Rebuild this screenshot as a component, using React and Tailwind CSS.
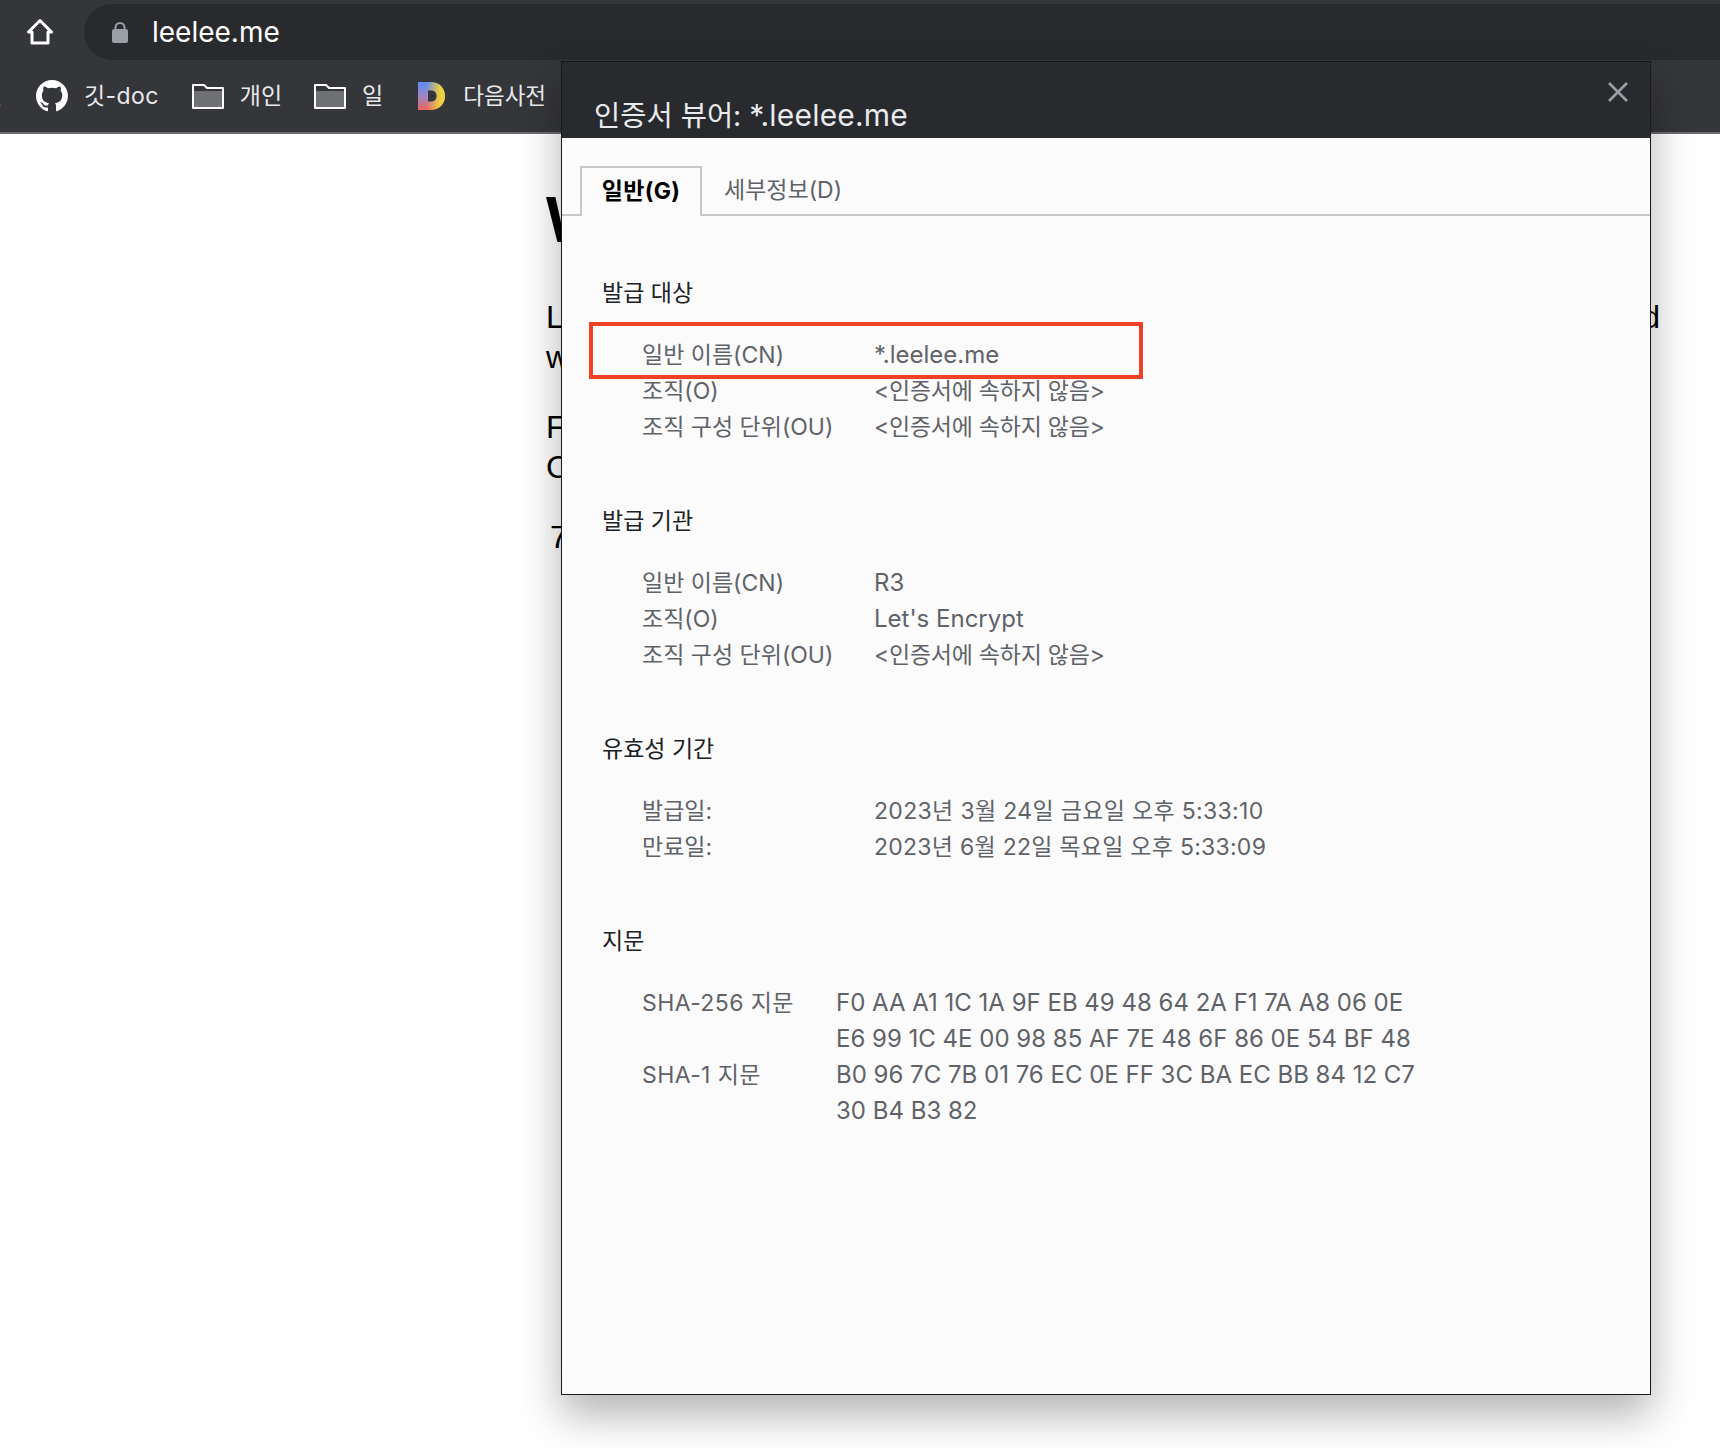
const font = 'font-["Inter","Noto_Sans_CJK_KR",sans-serif]'

function Home() {
  return (
    <svg width="28" height="28" viewBox="0 0 28 28" fill="none" stroke="#ffffff" strokeWidth="3" strokeLinejoin="round">
      <path d="M14 2.500 2.500 14H6v11h16V14h3.500z" />
    </svg>
  )
}

function Lock() {
  return (
    <svg width="18" height="22" viewBox="0 0 18 22">
      <path d="M4.500 9V6.500a4.500 4.500 0 0 1 9 0V9" fill="none" stroke="#9aa0a6" strokeWidth="2" />
      <rect x="1" y="8" width="16" height="14" rx="2" fill="#9aa0a6" />
    </svg>
  )
}

function Folder() {
  return (
    <svg width="32" height="25" viewBox="0 0 32 25">
      <path d="M1 24V1h11l3 3h16v20z" fill="#35363a" stroke="#ffffff" strokeWidth="2" strokeLinejoin="round" />
      <rect x="2" y="7" width="28" height="16" fill="#6f7072" />
    </svg>
  )
}

function Github() {
  return (
    <svg width="32" height="32" viewBox="0 0 16 16" fill="#ffffff">
      <path d="M8 0C3.580 0 0 3.580 0 8c0 3.540 2.290 6.530 5.470 7.590.4.070.55-.17.55-.38 0-.19-.01-.82-.01-1.490-2.010.37-2.530-.49-2.690-.94-.09-.23-.48-.94-.82-1.130-.28-.15-.68-.52-.01-.53.63-.01 1.080.58 1.230.82.72 1.210 1.870.87 2.330.66.07-.52.28-.87.51-1.070-1.780-.2-3.640-.89-3.640-3.950 0-.87.31-1.590.82-2.150-.08-.2-.36-1.020.08-2.120 0 0 .67-.21 2.200.82.64-.18 1.320-.27 2-.27s1.360.09 2 .27c1.530-1.040 2.200-.82 2.200-.82.44 1.100.16 1.920.08 2.120.51.56.82 1.270.82 2.150 0 3.070-1.870 3.750-3.650 3.950.29.25.54.73.54 1.480 0 1.070-.01 1.930-.01 2.200 0 .21.15.46.55.38A8.013 8.013 0 0 0 16 8c0-4.420-3.580-8-8-8z" />
    </svg>
  )
}

function DaumIcon() {
  return (
    <svg width="27" height="28" viewBox="0 0 27 28">
      <defs>
        <linearGradient id="daumBase" x1="0" y1="0" x2="0" y2="1">
          <stop offset="0" stopColor="#5b8df6" />
          <stop offset="0.5" stopColor="#9b86c8" />
          <stop offset="1" stopColor="#f0625a" />
        </linearGradient>
        <linearGradient id="daumSide" x1="0" y1="0" x2="1" y2="0">
          <stop offset="0.3" stopColor="#f0d33c" stopOpacity="0" />
          <stop offset="0.85" stopColor="#f0d33c" />
        </linearGradient>
      </defs>
      <path d="M0 0h12.500C21 0 27 6 27 14s-6 14-14.500 14H0z" fill="url(#daumBase)" />
      <path d="M0 0h12.500C21 0 27 6 27 14s-6 14-14.500 14H0z" fill="url(#daumSide)" />
      <path d="M10 8.500h3c3.500 0 5.500 2.200 5.500 5.500s-2 5.500-5.500 5.500h-3z" fill="#35363a" />
    </svg>
  )
}

function Bookmark({ icon, label, className }) {
  return (
    <div className={`flex items-center text-[23px] text-[#e8eaed] ${className}`}>
      {icon}
      <span className="ml-[16px]">{label}</span>
    </div>
  )
}

function Row({ label, value, labelClass = 'w-[232px]', valueClass = '' }) {
  return (
    <div className="flex h-[36px] items-center pl-[40px] text-[23px] text-[#5f6368]">
      <span className={`shrink-0 ${labelClass}`}>{label}</span>
      <span className={valueClass}>{value}</span>
    </div>
  )
}

function Section({ title, className, children }) {
  return (
    <section className={className}>
      <h2 className="h-[36px] text-[23px] leading-[36px] text-[#202124]">{title}</h2>
      <div className="mt-[26px]">{children}</div>
    </section>
  )
}

const notInCert = '<인증서에 속하지 않음>'
const sha = 'w-[194px] tracking-[0.4px]'

export default function App() {
  return (
    <div className={`relative h-[1448px] w-[1720px] overflow-hidden bg-white ${font}`}>
      <header className="h-[134px] border-b-[2px] border-[#6b6c6f] bg-[#35363a]">
        <div className="flex h-[64px] items-center pl-[26px]">
          <Home />
          <div className="ml-[30px] flex h-[56px] flex-1 items-center rounded-l-[28px] bg-[#292a2d] pl-[27px]">
            <Lock />
            <span className="ml-[23px] text-[28px] text-white">leelee.me</span>
          </div>
        </div>
        <div className="flex h-[64px] items-center">
          <div className="w-[36px] overflow-hidden text-[23px] text-[#e8eaed]">
            <span className="ml-[-19px]">일</span>
          </div>
          <Bookmark icon={<Github />} label={<span className="tracking-[0.4px]">깃-doc</span>} />
          <Bookmark icon={<Folder />} label="개인" className="ml-[33px]" />
          <Bookmark icon={<Folder />} label="일" className="ml-[32px]" />
          <Bookmark icon={<DaumIcon />} label={<span className="ml-[2px] text-[22.5px]">다음사전</span>} className="ml-[35px]" />
        </div>
      </header>

      <main className='absolute left-[546px] top-[134px] w-[1114px] font-["Liberation_Sans",sans-serif] text-black'>
        <h1 className="mt-[50px] text-[64px] font-bold leading-[72px]">W</h1>
        <div className="mt-[41px] flex justify-between text-[32px] leading-[40px]">
          <span>L</span>
          <span>d</span>
        </div>
        <p className="text-[32px] leading-[40px]">w</p>
        <p className="mt-[30px] text-[32px] leading-[40px]">F</p>
        <p className="text-[32px] leading-[40px]">C</p>
        <p className="mt-[30px] pl-[4px] text-[32px] leading-[40px]">7</p>
      </main>

      <div className="absolute left-[561px] top-[61px] flex h-[1334px] w-[1090px] flex-col border border-[#1a1a1c] bg-[#fbfbfb] shadow-[0_20px_40px_rgba(0,0,0,0.3)]">
        <div className="relative h-[76px] shrink-0 bg-[#292a2d]">
          <span className="absolute bottom-[2px] left-[32px] text-[28.5px] leading-[40px] text-[#e8eaed]">
            인증서 뷰어: <span className="text-[30px] tracking-[0.2px]">*.leelee.me</span>
          </span>
          <svg className="absolute right-[22px] top-[20px]" width="20" height="20" viewBox="0 0 20 20" stroke="#9aa0a6" strokeWidth="2.6">
            <path d="M1 1l18 18M19 1 1 19" />
          </svg>
        </div>

        <div className="flex h-[78px] shrink-0 items-end border-b-[2px] border-[#c8c8c8] pl-[18px]">
          <div className="mb-[-2px] flex h-[50px] w-[122px] items-center justify-center border-x-[2px] border-t-[2px] border-[#c8c8c8] bg-[#fbfbfb] pb-[2px] text-[23px] font-bold tracking-[0.3px] text-black">일반(G)</div>
          <div className="flex h-[48px] items-center pl-[22px] text-[23px] text-[#5f6368]">세부정보(D)</div>
        </div>

        <div className="relative flex-1 pl-[40px] pt-[59px]">
          <Section title="발급 대상">
            <Row label="일반 이름(CN)" value="*.leelee.me" valueClass="text-[24px]" />
            <Row label="조직(O)" value={notInCert} valueClass="tracking-[-0.25px]" />
            <Row label="조직 구성 단위(OU)" value={notInCert} valueClass="tracking-[-0.25px]" />
          </Section>
          <Section title="발급 기관" className="mt-[58px]">
            <Row label="일반 이름(CN)" value="R3" valueClass="text-[24px]" />
            <Row label="조직(O)" value="Let's Encrypt" valueClass="text-[24px]" />
            <Row label="조직 구성 단위(OU)" value={notInCert} valueClass="tracking-[-0.25px]" />
          </Section>
          <Section title="유효성 기간" className="mt-[58px]">
            <Row label="발급일:" value="2023년 3월 24일 금요일 오후 5:33:10" valueClass="tracking-[0.33px]" />
            <Row label="만료일:" value="2023년 6월 22일 목요일 오후 5:33:09" valueClass="tracking-[0.26px]" />
          </Section>
          <Section title="지문" className="mt-[58px]">
            <Row label="SHA-256 지문" value="F0 AA A1 1C 1A 9F EB 49 48 64 2A F1 7A A8 06 0E" labelClass={sha} valueClass="text-[24px]" />
            <Row label="" value="E6 99 1C 4E 00 98 85 AF 7E 48 6F 86 0E 54 BF 48" labelClass={sha} valueClass="text-[24px]" />
            <Row label="SHA-1 지문" value="B0 96 7C 7B 01 76 EC 0E FF 3C BA EC BB 84 12 C7" labelClass={sha} valueClass="text-[24px]" />
            <Row label="" value="30 B4 B3 82" labelClass={sha} valueClass="text-[24px]" />
          </Section>
          <div className="absolute left-[27px] top-[106px] h-[57px] w-[554px] border-[4px] border-[#ee4125]" />
        </div>
      </div>
    </div>
  )
}
